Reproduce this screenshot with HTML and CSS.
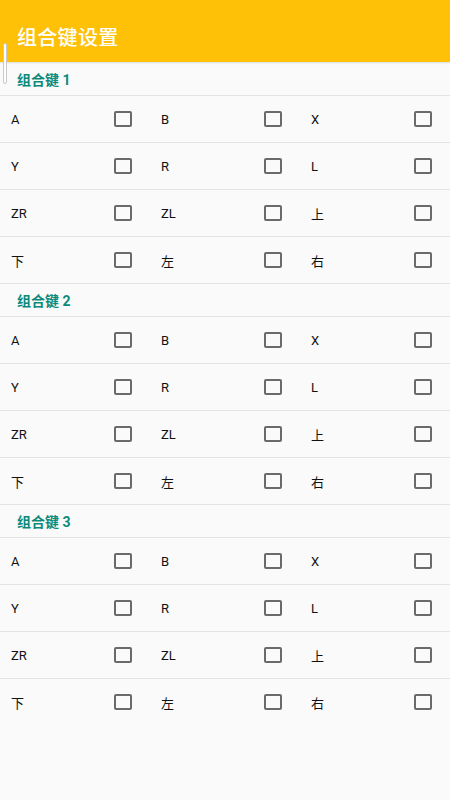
FILE: index.html
```html
<!DOCTYPE html>
<html lang="zh">
<head>
<meta charset="utf-8">
<title>组合键设置</title>
<link rel="stylesheet" href="styles.css">
</head>
<body>
<header class="appbar"><span class="title">组合键设置</span></header>
<div class="scroll-thumb"></div>
<main class="list">
  <section class="group">
    <div class="group-title">组合键 1</div>
    <div class="row"><div class="cell"><span class="label">A</span><span class="box"></span></div><div class="cell"><span class="label">B</span><span class="box"></span></div><div class="cell"><span class="label">X</span><span class="box"></span></div></div>
    <div class="row"><div class="cell"><span class="label">Y</span><span class="box"></span></div><div class="cell"><span class="label">R</span><span class="box"></span></div><div class="cell"><span class="label">L</span><span class="box"></span></div></div>
    <div class="row"><div class="cell"><span class="label">ZR</span><span class="box"></span></div><div class="cell"><span class="label">ZL</span><span class="box"></span></div><div class="cell"><span class="label">上</span><span class="box"></span></div></div>
    <div class="row"><div class="cell"><span class="label">下</span><span class="box"></span></div><div class="cell"><span class="label">左</span><span class="box"></span></div><div class="cell"><span class="label">右</span><span class="box"></span></div></div>
  </section>
  <section class="group">
    <div class="group-title">组合键 2</div>
    <div class="row"><div class="cell"><span class="label">A</span><span class="box"></span></div><div class="cell"><span class="label">B</span><span class="box"></span></div><div class="cell"><span class="label">X</span><span class="box"></span></div></div>
    <div class="row"><div class="cell"><span class="label">Y</span><span class="box"></span></div><div class="cell"><span class="label">R</span><span class="box"></span></div><div class="cell"><span class="label">L</span><span class="box"></span></div></div>
    <div class="row"><div class="cell"><span class="label">ZR</span><span class="box"></span></div><div class="cell"><span class="label">ZL</span><span class="box"></span></div><div class="cell"><span class="label">上</span><span class="box"></span></div></div>
    <div class="row"><div class="cell"><span class="label">下</span><span class="box"></span></div><div class="cell"><span class="label">左</span><span class="box"></span></div><div class="cell"><span class="label">右</span><span class="box"></span></div></div>
  </section>
  <section class="group">
    <div class="group-title">组合键 3</div>
    <div class="row"><div class="cell"><span class="label">A</span><span class="box"></span></div><div class="cell"><span class="label">B</span><span class="box"></span></div><div class="cell"><span class="label">X</span><span class="box"></span></div></div>
    <div class="row"><div class="cell"><span class="label">Y</span><span class="box"></span></div><div class="cell"><span class="label">R</span><span class="box"></span></div><div class="cell"><span class="label">L</span><span class="box"></span></div></div>
    <div class="row"><div class="cell"><span class="label">ZR</span><span class="box"></span></div><div class="cell"><span class="label">ZL</span><span class="box"></span></div><div class="cell"><span class="label">上</span><span class="box"></span></div></div>
    <div class="row last"><div class="cell"><span class="label">下</span><span class="box"></span></div><div class="cell"><span class="label">左</span><span class="box"></span></div><div class="cell"><span class="label">右</span><span class="box"></span></div></div>
  </section>
</main>
</body>
</html>
```
FILE: styles.css
```css
* { box-sizing: border-box; }
html, body { margin: 0; padding: 0; }
body {
  width: 450px;
  height: 800px;
  background: #fafafa;
  font-family: Roboto, "Noto Sans CJK SC", sans-serif;
  color: #111;
  position: relative;
  overflow: hidden;
}
.appbar {
  height: 62px;
  background: #ffc107;
  display: flex;
  align-items: center;
  padding: 0 17px;
  padding-top: 10px;
  box-shadow: 0 1px 2px rgba(0,0,0,0.12);
  position: relative;
  z-index: 1;
}
.title {
  color: #fff;
  font-size: 20px;
  font-weight: 500;
  font-family: "Noto Sans CJK SC", sans-serif;
  letter-spacing: 0.3px;
}
.scroll-thumb {
  position: absolute;
  left: 3px;
  top: 43px;
  width: 4px;
  height: 41px;
  border: 1px solid #c8c8c8;
  border-radius: 2px;
  background: #fdfdfd;
  z-index: 2;
}
.list { padding-top: 1px; }
.group-title {
  height: 33px;
  border-bottom: 1px solid #e3e3e3;
  display: flex;
  align-items: center;
  padding-left: 17px;
  font-size: 14px;
  font-weight: 700;
  color: #0b8a79;
  font-family: Roboto, "Noto Sans CJK SC", sans-serif;
}
.row {
  height: 47px;
  border-bottom: 1px solid #e3e3e3;
  display: grid;
  grid-template-columns: 150px 150px 150px;
}
.row.last { border-bottom: none; }
.cell {
  display: flex;
  align-items: center;
  padding-left: 11px;
}
.label {
  width: 103px;
  font-size: 13px;
  font-family: Roboto, "Noto Sans CJK SC", sans-serif;
  color: #111;
}
.box {
  width: 18px;
  height: 16px;
  border: 2px solid #6a6a6a;
  border-radius: 2px;
  margin-top: -1px;
}
```
